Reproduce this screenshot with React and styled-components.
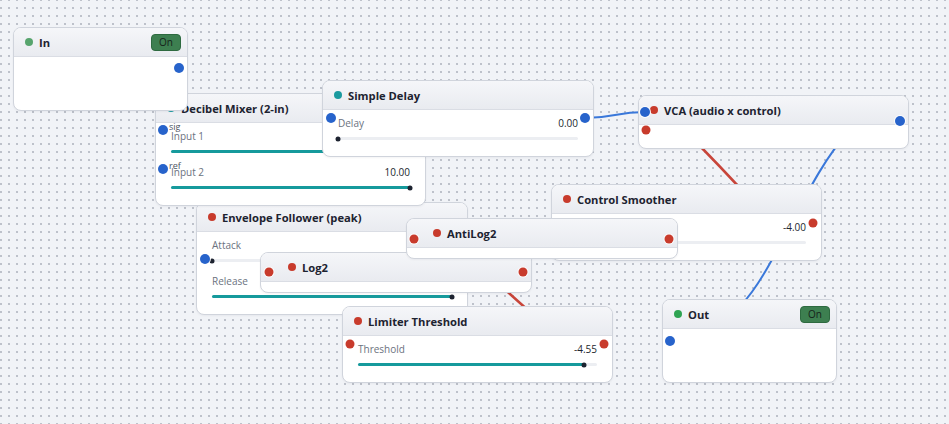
import React from 'react';
import styled, { createGlobalStyle } from 'styled-components';

const GlobalStyle = createGlobalStyle`
  html, body {
    margin: 0;
    padding: 0;
  }
  body {
    font-family: "Open Sans", "Noto Sans", sans-serif;
    background: #f0f2f6;
  }
`;

const colors = {
  blue: '#2763cb',
  red: '#c83b2c',
  teal: '#1b9a9f',
  green: '#57a46d',
  brightGreen: '#2ea352',
  track: '#eceef2',
  fill: '#169a9c',
};

const CanvasStyled = styled.div`
  position: relative;
  width: 949px;
  height: 424px;
  overflow: hidden;
  background-color: #f1f3f7;
  background-image: radial-gradient(circle, #bcc0c9 0.7px, transparent 1.1px);
  background-size: 8px 8px;
  background-position: -3px -4px;
`;

const WiresStyled = styled.svg`
  position: absolute;
  left: 0;
  top: 0;
  width: 100%;
  height: 100%;
`;

const WireStyled = styled.path`
  fill: none;
  stroke: ${({ $color }) => $color};
  stroke-width: ${({ $width }) => $width}px;
  stroke-linecap: round;
`;

const NodeStyled = styled.div`
  position: absolute;
  left: ${({ $x }) => $x}px;
  top: ${({ $y }) => $y}px;
  width: ${({ $w }) => $w}px;
  z-index: ${({ $z }) => $z};
  box-sizing: border-box;
  background: #fff;
  border: 1px solid #d0d4dc;
  border-radius: 8px;
  box-shadow: 0 1px 2px rgba(30, 40, 60, 0.05);
`;

const HeaderStyled = styled.div`
  display: flex;
  align-items: center;
  gap: 6px;
  height: 28px;
  padding: 0 6px 0 ${({ $indent }) => $indent}px;
  background: linear-gradient(#f5f6f9, #e9ebf0);
  border-bottom: 1px solid #dadde4;
  border-radius: 7px 7px 0 0;
`;

const DotStyled = styled.span`
  flex: none;
  width: 8px;
  height: 8px;
  border-radius: 50%;
  background: ${({ $color }) => $color};
`;

const TitleStyled = styled.span`
  flex: 1;
  font-size: 11.2px;
  font-weight: 700;
  color: #1d2330;
  white-space: nowrap;
`;

const ToggleStyled = styled.button`
  width: 30px;
  height: 17px;
  padding: 0;
  border: 1px solid #2e6a40;
  border-radius: 4px;
  background: #3d7f50;
  color: #15231a;
  font-family: inherit;
  font-size: 10px;
  line-height: 15px;
`;

const BodyStyled = styled.div`
  display: flex;
  flex-direction: column;
  gap: 12px;
  min-height: ${({ $min }) => $min}px;
  padding: ${({ $padded }) => ($padded ? '6px 15px 16px' : '0')};
`;

const RowStyled = styled.div`
  display: flex;
  flex-direction: column;
  gap: 7px;
`;

const RowHeadStyled = styled.div`
  display: flex;
  justify-content: space-between;
  align-items: center;
  height: 14px;
  font-size: 10px;
`;

const LabelStyled = styled.span`
  color: #6b7280;
`;

const ValueStyled = styled.span`
  color: #22262e;
`;

const TrackStyled = styled.div`
  position: relative;
  height: 3px;
  border-radius: 2px;
  background: ${colors.track};
`;

const FillStyled = styled.div`
  height: 100%;
  border-radius: 2px;
  background: ${colors.fill};
`;

const KnobStyled = styled.span`
  position: absolute;
  top: 50%;
  width: 5px;
  height: 5px;
  border-radius: 50%;
  background: #1d2330;
  transform: translate(-50%, -50%);
`;

const PortStyled = styled.span`
  position: absolute;
  left: ${({ $x }) => $x}px;
  top: ${({ $y }) => $y}px;
  width: ${({ $size }) => $size}px;
  height: ${({ $size }) => $size}px;
  border-radius: 50%;
  background: ${({ $color }) => $color};
  box-shadow: 0 0 0 1px rgba(255, 255, 255, 0.85);
  transform: translate(-50%, -50%);
  z-index: 2;
`;

/* port names sit just right of the socket, over the first row label */
const PortLabelStyled = styled.span`
  position: absolute;
  left: ${({ $x }) => $x + 6}px;
  top: ${({ $y }) => $y - 8}px;
  font-size: 9px;
  line-height: 10px;
  color: #4b5260;
`;

const wires = [
  { d: 'M585 118 C615 118 615 112 645 112', color: '#3a78da', width: 2 },
  { d: 'M848 133 C809 172 775 271 741 305', color: '#3a78da', width: 2 },
  { d: 'M688 134 C705 151 722 168 748 197', color: '#c8453a', width: 2.5 },
  { d: 'M500 285 L530 312', color: '#c8453a', width: 2.5 },
];

const nodes = [
  {
    id: 'envelope',
    title: 'Envelope Follower (peak)',
    x: 196, y: 202, w: 272, z: 1,
    dot: colors.red,
    rows: [
      { label: 'Attack', value: '0.00', pct: 0 },
      { label: 'Release', value: '1.00', pct: 100 },
    ],
    ports: [{ x: 8, y: 56, color: colors.blue }],
  },
  {
    id: 'mixer',
    title: 'Decibel Mixer (2-in)',
    x: 155, y: 93, w: 271, z: 2,
    dot: colors.teal,
    rows: [
      { label: 'Input 1', value: '10.00', pct: 100 },
      { label: 'Input 2', value: '10.00', pct: 100 },
    ],
    ports: [
      { x: 7, y: 36, color: colors.blue, label: 'sig' },
      { x: 7, y: 75, color: colors.blue, label: 'ref' },
    ],
  },
  {
    id: 'in',
    title: 'In',
    x: 13, y: 27, w: 175, z: 3,
    dot: colors.green,
    toggle: true,
    body: 53,
    ports: [{ x: 165, y: 40, color: colors.blue }],
  },
  {
    id: 'delay',
    title: 'Simple Delay',
    x: 322, y: 80, w: 272, z: 4,
    dot: colors.teal,
    rows: [{ label: 'Delay', value: '0.00', pct: 0 }],
    ports: [
      { x: 8, y: 37, color: colors.blue },
      { x: 262, y: 37, color: colors.blue },
    ],
  },
  {
    id: 'vca',
    title: 'VCA (audio x control)',
    x: 638, y: 95, w: 271, z: 4,
    dot: colors.red,
    body: 23,
    ports: [
      { x: 7, y: 34, color: colors.red, size: 9 },
      { x: 6, y: 16, color: colors.blue },
      { x: 261, y: 25, color: colors.blue },
    ],
  },
  {
    id: 'smoother',
    title: 'Control Smoother',
    x: 551, y: 184, w: 271, z: 5,
    dot: colors.red,
    rows: [{ label: 'Smoothing', value: '-4.00', pct: 22 }],
    ports: [
      { x: 7, y: 38, color: colors.red, size: 9 },
      { x: 261, y: 38, color: colors.red, size: 9 },
    ],
  },
  {
    id: 'log2',
    title: 'Log2',
    x: 260, y: 252, w: 272, z: 6,
    dot: colors.red,
    indent: 27,
    body: 10,
    ports: [
      { x: 8, y: 19, color: colors.red, size: 9 },
      { x: 262, y: 19, color: colors.red, size: 9 },
    ],
  },
  {
    id: 'antilog2',
    title: 'AntiLog2',
    x: 406, y: 218, w: 272, z: 7,
    dot: colors.red,
    indent: 26,
    body: 10,
    ports: [
      { x: 7, y: 20, color: colors.red, size: 9 },
      { x: 262, y: 20, color: colors.red, size: 9 },
    ],
  },
  {
    id: 'limiter',
    title: 'Limiter Threshold',
    x: 342, y: 306, w: 271, z: 8,
    dot: colors.red,
    rows: [{ label: 'Threshold', value: '-4.55', pct: 94.6 }],
    ports: [
      { x: 7, y: 37, color: colors.red, size: 9 },
      { x: 261, y: 37, color: colors.red, size: 9 },
    ],
  },
  {
    id: 'out',
    title: 'Out',
    x: 662, y: 299, w: 175, z: 8,
    dot: colors.brightGreen,
    toggle: true,
    body: 53,
    ports: [{ x: 7, y: 41, color: colors.blue }],
  },
];

const Slider = ({ pct }) => (
  <TrackStyled>
    <FillStyled style={{ width: `${pct}%` }} />
    <KnobStyled style={{ left: `${pct}%` }} />
  </TrackStyled>
);

const Node = ({ node }) => {
  const { title, x, y, w, z, dot, toggle, rows, body, ports, indent = 11 } = node;

  return (
    <NodeStyled $x={x} $y={y} $w={w} $z={z}>
      <HeaderStyled $indent={indent}>
        <DotStyled $color={dot} />
        <TitleStyled>{title}</TitleStyled>
        {toggle && <ToggleStyled type="button">On</ToggleStyled>}
      </HeaderStyled>
      <BodyStyled $padded={!!rows} $min={body || 0}>
        {rows &&
          rows.map((row) => (
            <RowStyled key={row.label}>
              <RowHeadStyled>
                <LabelStyled>{row.label}</LabelStyled>
                <ValueStyled>{row.value}</ValueStyled>
              </RowHeadStyled>
              <Slider pct={row.pct} />
            </RowStyled>
          ))}
      </BodyStyled>
      {ports.map((port, i) => (
        <React.Fragment key={i}>
          <PortStyled
            $x={port.x}
            $y={port.y}
            $size={port.size || 10}
            $color={port.color}
          />
          {port.label && (
            <PortLabelStyled $x={port.x} $y={port.y}>
              {port.label}
            </PortLabelStyled>
          )}
        </React.Fragment>
      ))}
    </NodeStyled>
  );
};

const App = () => (
  <>
    <GlobalStyle />
    <CanvasStyled>
      <WiresStyled viewBox="0 0 949 424">
        {wires.map((wire, i) => (
          <WireStyled key={i} d={wire.d} $color={wire.color} $width={wire.width} />
        ))}
      </WiresStyled>
      {nodes.map((node) => (
        <Node key={node.id} node={node} />
      ))}
    </CanvasStyled>
  </>
);

export default App;
